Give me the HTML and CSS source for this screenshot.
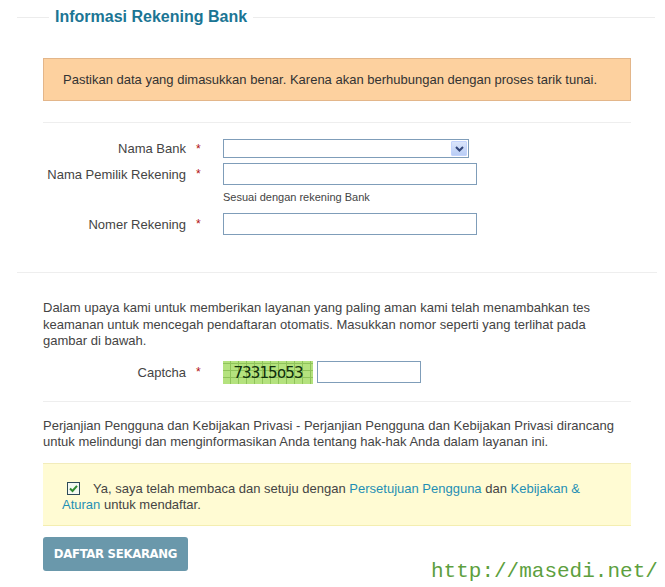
FILE: index.html
```html
<!DOCTYPE html>
<html>
<head>
<meta charset="utf-8">
<link rel="stylesheet" href="styles.css">
</head>
<body>
<fieldset class="panel">
  <legend class="panel-title">Informasi Rekening Bank</legend>

  <div class="notice">Pastikan data yang dimasukkan benar. Karena akan berhubungan dengan proses tarik tunai.</div>

  <hr class="divider">

  <div class="fields">
    <div class="row row-select">
      <label class="label">Nama Bank</label><span class="req">*</span>
      <div class="select">
        <span class="select-btn">
          <svg width="9" height="6" viewBox="0 0 9 6"><path d="M1 1 L4.5 4.5 L8 1" fill="none" stroke="#33467a" stroke-width="2"/></svg>
        </span>
      </div>
    </div>
    <div class="row row-name">
      <label class="label">Nama Pemilik Rekening</label><span class="req">*</span>
      <div class="input"></div>
    </div>
    <div class="hint">Sesuai dengan rekening Bank</div>
    <div class="row row-number">
      <label class="label">Nomer Rekening</label><span class="req">*</span>
      <div class="input"></div>
    </div>
  </div>

  <hr class="divider divider-full">

  <p class="text text-captcha">Dalam upaya kami untuk memberikan layanan yang paling aman kami telah menambahkan tes keamanan untuk mencegah pendaftaran otomatis. Masukkan nomor seperti yang terlihat pada gambar di bawah.</p>

  <div class="row row-captcha">
    <label class="label">Captcha</label><span class="req">*</span>
    <div class="captcha">73315o53</div>
    <div class="input input-captcha"></div>
  </div>

  <hr class="divider divider-captcha">

  <p class="text text-terms">Perjanjian Pengguna dan Kebijakan Privasi - Perjanjian Pengguna dan Kebijakan Privasi dirancang untuk melindungi dan menginformasikan Anda tentang hak-hak Anda dalam layanan ini.</p>

  <div class="agree">
    <span class="check"><svg width="13" height="13" viewBox="0 0 13 13"><rect x="0.5" y="0.5" width="12" height="12" fill="#f4f8f0" stroke="#2e4a58"/><path d="M3 6.5 L5.5 9 L10 3.8" fill="none" stroke="#2f8a2f" stroke-width="2"/></svg></span>Ya, saya telah membaca dan setuju dengan <a class="link">Persetujuan Pengguna</a> dan <a class="link">Kebijakan &amp; Aturan</a> untuk mendaftar.
  </div>

  <div class="footer">
    <button class="btn">DAFTAR SEKARANG</button>
    <span class="watermark">http://masedi.net/</span>
  </div>
</fieldset>
</body>
</html>
```

FILE: styles.css
```css
html, body {
  margin: 0;
  padding: 0;
  background: #fff;
}
body {
  font-family: "Liberation Sans", Arial, sans-serif;
  font-size: 13px;
  color: #3a3a3a;
}
.panel {
  margin: 8px 10px 0 17px;
  padding: 0 24px 0 26px;
  border: 0;
  border-top: 1px solid #ececec;
  width: 588px;
  min-width: 0;
}
.panel-title {
  margin-left: 6px;
  padding: 0 6px;
  font-size: 16px;
  font-weight: bold;
  color: #1b7594;
}
.notice {
  margin-top: 32px;
  height: 41px;
  line-height: 41px;
  padding: 0 0 0 19px;
  background: #fdd19f;
  border: 1px solid #e3b68a;
  color: #333;
}
.divider {
  border: 0;
  border-top: 1px solid #eeeeee;
  margin: 21px 0 0 0;
  height: 0;
}
.fields {
  margin-top: 16px;
}
.row {
  display: flex;
  align-items: center;
}
.label {
  width: 143px;
  text-align: right;
  color: #444;
}
.req {
  width: 37px;
  padding-left: 10px;
  box-sizing: border-box;
  color: #b01010;
  font-size: 12px;
}
.select {
  width: 243px;
  height: 17px;
  border: 1px solid #7f9db9;
  position: relative;
  display: flex;
  justify-content: flex-end;
  align-items: center;
  padding-right: 1px;
}
.select-btn {
  width: 16px;
  height: 15px;
  background: linear-gradient(#dbe5fb, #b9cdf5);
  border: 1px solid #c3d3fd;
  box-sizing: border-box;
  display: flex;
  align-items: center;
  justify-content: center;
  border-radius: 1px;
}
.input {
  width: 252px;
  height: 20px;
  border: 1px solid #7f9db9;
  background: #fff;
}
.row-name {
  margin-top: 5px;
}
.hint {
  margin: 5px 0 0 180px;
  font-size: 11px;
  color: #444;
  line-height: 14px;
}
.row-number {
  margin-top: 9px;
}
.divider-full {
  margin: 37px -26px 0 -26px;
}
.text {
  margin: 0;
  line-height: 16.5px;
  color: #444;
}
.text-captcha {
  margin-top: 27px;
}
.row-captcha {
  margin-top: 11px;
}
.captcha {
  width: 90px;
  height: 23px;
  box-sizing: border-box;
  background-color: #b4e27e;
  background-image:
    repeating-linear-gradient(90deg, transparent 0 7px, #8fc35a 7px 8px),
    repeating-linear-gradient(0deg, transparent 0 6px, #8fc35a 6px 7px);
  font-family: "DejaVu Sans Mono", "Liberation Mono", monospace;
  font-size: 16px;
  letter-spacing: -1px;
  color: #10300c;
  text-align: center;
  line-height: 23px;
}
.input-captcha {
  width: 102px;
  margin-left: 4px;
}
.divider-captcha {
  margin-top: 17px;
}
.text-terms {
  margin-top: 16px;
}
.agree {
  margin-top: 12px;
  background: #fffbd3;
  border-top: 1px solid #f2ecbb;
  border-bottom: 1px solid #f4eeb0;
  padding: 17px 40px 11px 19px;
  line-height: 16.5px;
  color: #444;
}
.check {
  display: inline-block;
  vertical-align: -2px;
  margin: 0 13px 0 5px;
  line-height: 0;
}
.link {
  color: #1f8fb4;
}
.footer {
  margin-top: 11px;
  display: flex;
  align-items: flex-start;
}
.btn {
  flex-shrink: 0;
  width: 145px;
  height: 34px;
  background: #6a98ab;
  color: #fff;
  border: 0;
  border-radius: 3px;
  font-family: "DejaVu Sans Condensed", "Liberation Sans Narrow", sans-serif;
  font-stretch: condensed;
  font-weight: bold;
  font-size: 13px;
  letter-spacing: -0.3px;
  white-space: nowrap;
  padding: 0;
}
.watermark {
  flex-shrink: 0;
  margin: 24px 0 0 243px;
  font-family: "Liberation Mono", "Courier New", monospace;
  font-size: 21px;
  color: #5d9f3e;
  white-space: nowrap;
  line-height: 22px;
}
```
